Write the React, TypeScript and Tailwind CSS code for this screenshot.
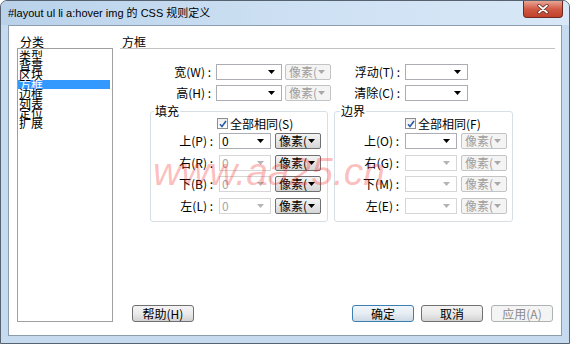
import clsx from 'clsx';

const CATEGORIES = ['类型', '背景', '区块', '方框', '边框', '列表', '定位', '扩展'];

function Arrow({ color }: { color: string }) {
  return (
    <svg width="7" height="4" viewBox="0 0 7 4" className="shrink-0">
      <path d="M0 0h7L3.5 4z" fill={color} />
    </svg>
  );
}

/** Editable combobox: value field with a drop arrow on the right. */
function Combo({ width, value = '', disabled }: { width: string; value?: string; disabled?: boolean }) {
  return (
    <div
      className={clsx(
        'flex h-[16px] shrink-0 items-center border bg-white pl-[2px] pr-[6px] leading-none',
        width,
        disabled ? 'border-[#d6d6d6] text-[#a6a6a6]' : 'border-[#abadb3] text-black',
      )}
    >
      <span className="flex-1">{value}</span>
      <Arrow color={disabled ? '#b4b4b4' : '#000'} />
    </div>
  );
}

/** Unit dropdown list (像素). Enabled ones are drawn button-style. */
function Unit({ disabled }: { disabled?: boolean }) {
  return (
    <div
      className={clsx(
        'ml-[4px] flex h-[16px] w-[46px] shrink-0 items-center rounded-[2px] border pl-[3px] pr-[5px] leading-none',
        disabled
          ? 'border-[#c4c4c4] bg-[#f4f4f4] text-[#9e9e9e]'
          : 'border-[#707070] bg-linear-to-b from-[#f4f4f4] to-[#d6d6d6] text-black',
      )}
    >
      <span className="flex-1">像素(</span>
      <Arrow color={disabled ? '#a8a8a8' : '#000'} />
    </div>
  );
}

function Check({ label }: { label: string }) {
  return (
    <div className="flex h-[13px] items-center gap-[2px] leading-none">
      <div className="flex h-[11px] w-[11px] items-center justify-center border border-[#8f8f8f] bg-linear-to-b from-[#eeeeee] to-[#ffffff]">
        <svg width="8" height="8" viewBox="0 0 8 8">
          <path d="M1 4.2 3 6.5 7 1" stroke="#2a5ca8" strokeWidth="1.6" fill="none" />
        </svg>
      </div>
      <span>{label}</span>
    </div>
  );
}

type Side = { label: string; value?: string; disabled?: boolean; unitDisabled?: boolean };

const PADDING: Side[] = [
  { label: '上(P) :', value: '0' },
  { label: '右(R) :', value: '0', disabled: true },
  { label: '下(B) :', value: '0', disabled: true },
  { label: '左(L) :', value: '0', disabled: true },
];

const MARGIN: Side[] = [
  { label: '上(O) :', unitDisabled: true },
  { label: '右(G) :', disabled: true, unitDisabled: true },
  { label: '下(M) :', disabled: true, unitDisabled: true },
  { label: '左(E) :', disabled: true, unitDisabled: true },
];

function Group({
  title,
  check,
  rows,
  width,
  labelWidth,
  checkPad,
  legendPad,
}: {
  title: string;
  check: string;
  rows: Side[];
  width: string;
  labelWidth: string;
  checkPad: string;
  legendPad: string;
}) {
  return (
    <fieldset className={clsx('h-[117px] shrink-0 rounded-[3px] border border-[#d5dfe5]', width)}>
      <legend className={clsx('h-[12px] px-[1px] leading-[12px]', legendPad)}>{title}</legend>
      <div className={checkPad}>
        <Check label={check} />
      </div>
      <div className="mt-[3px] flex flex-col gap-[5.5px]">
        {rows.map((r) => (
          <div key={r.label} className="flex h-[16px] items-center">
            <span className={clsx('pr-[2px] text-right leading-none', labelWidth)}>{r.label}</span>
            <div className="ml-[4px]">
              <Combo width="w-[52px]" value={r.value} disabled={r.disabled} />
            </div>
            <Unit disabled={r.unitDisabled} />
          </div>
        ))}
      </div>
    </fieldset>
  );
}

function Button({ children, kind = 'normal' }: { children: string; kind?: 'normal' | 'default' | 'disabled' }) {
  return (
    <div
      className={clsx(
        'flex h-[17px] w-[62px] items-center justify-center rounded-[3px] border leading-none',
        kind === 'normal' && 'border-[#707070] bg-linear-to-b from-[#f3f3f3] via-[#ebebeb] to-[#d2d2d2]',
        kind === 'default' && 'border-[#3c7fb1] bg-linear-to-b from-[#f0f6fb] via-[#e6edf3] to-[#cdd9e4]',
        kind === 'disabled' && 'border-[#adb2b5] bg-[#f4f4f4] text-[#8a8a8a]',
      )}
    >
      {children}
    </div>
  );
}

export default function App() {
  return (
    <div className="flex h-[344px] w-[570px] flex-col overflow-hidden rounded-t-[7px] border border-[#56626f] bg-[#c6dbf0] font-['Noto_Sans_CJK_SC',sans-serif] text-[12px] text-black">
      {/* Title bar */}
      <div className="flex h-[24px] shrink-0 items-start bg-linear-to-r from-[#b9d2ea] via-[#cde0f3] to-[#d8e8f7]">
        <span className="self-center pl-[7px] font-['Liberation_Sans','Noto_Sans_CJK_SC',sans-serif] text-[11px] leading-none">
          #layout ul li a:hover img 的 CSS 规则定义
        </span>
        <div className="mr-[6px] ml-auto flex h-[17px] w-[40px] items-center justify-center rounded-b-[4px] border border-t-0 border-[#6e2a20] bg-linear-to-b from-[#e8a596] via-[#d05a45] to-[#c1402b]">
          <svg width="12" height="10" viewBox="0 0 12 10">
            <path d="M2 1.5 10 8.5M10 1.5 2 8.5" stroke="#5a2018" strokeWidth="3.2" strokeLinecap="round" />
            <path d="M2 1.5 10 8.5M10 1.5 2 8.5" stroke="#fff" strokeWidth="1.8" strokeLinecap="round" />
          </svg>
        </div>
      </div>

      {/* Client area */}
      <div className="relative mx-[7px] mb-[7px] flex flex-1 border border-[#8c9db0] bg-white pt-[10px] pb-[13px]">
        {/* Category list */}
        <div className="ml-[8px] flex w-[96px] shrink-0 flex-col">
          <div className="h-[12px] pl-[3px] leading-[12px]">分类</div>
          <div className="flex-1 border border-[#a0a0a0] bg-white pt-[2px]">
            {CATEGORIES.map((c) => (
              <div
                key={c}
                className={clsx(
                  'mr-[2px] h-[9.5px] pl-[1px] leading-[9.5px]',
                  c === '方框' && 'bg-[#3399ff] text-white',
                )}
              >
                {c}
              </div>
            ))}
          </div>
        </div>

        {/* Box panel */}
        <div className="ml-[7px] flex w-[435px] flex-col">
          <div className="h-[12px] pl-[2px] leading-[12px]">方框</div>
          <div className="h-px bg-[#c3c3c3]" />

          <div className="mt-[15px] flex h-[16px] items-center">
            <span className="w-[93px] pr-[2px] text-right leading-none">宽(W) :</span>
            <div className="ml-[3px]">
              <Combo width="w-[66px]" />
            </div>
            <div className="-ml-[1px]">
              <Unit disabled />
            </div>
            <span className="w-[71px] pr-[2px] text-right leading-none">浮动(T) :</span>
            <div className="ml-[3px]">
              <Combo width="w-[63px]" />
            </div>
          </div>
          <div className="mt-[5px] flex h-[16px] items-center">
            <span className="w-[93px] pr-[2px] text-right leading-none">高(H) :</span>
            <div className="ml-[3px]">
              <Combo width="w-[66px]" />
            </div>
            <div className="-ml-[1px]">
              <Unit disabled />
            </div>
            <span className="w-[71px] pr-[2px] text-right leading-none">清除(C) :</span>
            <div className="ml-[3px]">
              <Combo width="w-[63px]" />
            </div>
          </div>

          <div className="mt-[4px] ml-[30px] flex gap-[6px]">
            <Group
              title="填充"
              check="全部相同(S)"
              rows={PADDING}
              width="w-[178px]"
              labelWidth="w-[64px]"
              checkPad="pl-[66px]"
              legendPad="ml-[3px]"
            />
            <Group
              title="边界"
              check="全部相同(F)"
              rows={MARGIN}
              width="w-[179px]"
              labelWidth="w-[66px]"
              checkPad="pl-[70px]"
              legendPad="ml-[5px]"
            />
          </div>

          <div className="mt-auto flex h-[17px] items-center pr-[2px]">
            <div className="ml-[12px]">
              <Button>帮助(H)</Button>
            </div>
            <div className="ml-auto flex gap-[7px]">
              <Button kind="default">确定</Button>
              <Button>取消</Button>
              <div className="ml-[1px]">
                <Button kind="disabled">应用(A)</Button>
              </div>
            </div>
          </div>
        </div>

        {/* Watermark */}
        <div className="pointer-events-none absolute top-[126px] left-[144px] font-['Liberation_Sans',sans-serif] text-[39px] leading-none text-[rgba(245,30,30,0.28)] italic">
          www.aa25.cn
        </div>
      </div>
    </div>
  );
}
